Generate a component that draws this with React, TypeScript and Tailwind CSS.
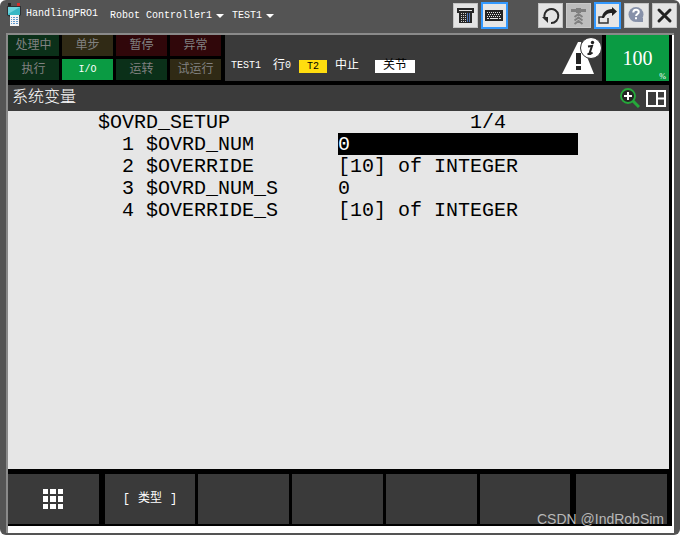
import React from "react";

type Tile = { label: string; color: string };

const tiles: Tile[][] = [
  [
    { label: "处理中", color: "bg-[#0b3019] text-[#818181]" },
    { label: "执行", color: "bg-[#0b3019] text-[#818181]" },
  ],
  [
    { label: "单步", color: "bg-[#302a15] text-[#818181]" },
    { label: "I/O", color: "bg-[#0a9b43] text-white" },
  ],
  [
    { label: "暂停", color: "bg-[#30070a] text-[#818181]" },
    { label: "运转", color: "bg-[#0b3019] text-[#818181]" },
  ],
  [
    { label: "异常", color: "bg-[#30070a] text-[#818181]" },
    { label: "试运行", color: "bg-[#302a15] text-[#818181]" },
  ],
];

const variables = [
  { name: "$OVRD_NUM", value: "0", selected: true },
  { name: "$OVERRIDE", value: "[10] of INTEGER" },
  { name: "$OVRD_NUM_S", value: "0" },
  { name: "$OVERRIDE_S", value: "[10] of INTEGER" },
];

const mono = "font-['Liberation_Mono','Noto_Sans_CJK_SC',monospace]";

const PendantIcon = () => (
  <svg width="16" height="26" viewBox="0 0 16 26" className="shrink-0" aria-hidden="true">
    <path d="M2 1h3v3H2z" fill="#242424" />
    <path d="M11 1h3v3h-3z" fill="#d82b2b" />
    <path d="M1 4h14v9l-3 2H4l-3-2z" fill="#2d3033" />
    <rect x="2" y="5" width="12" height="8" fill="#36b8c5" />
    <path d="M2 5h12L2 12z" fill="#6ed3dc" />
    <path d="M4 13h9v11H4z" fill="#f4f4f4" />
    <path d="M5 15h1v1H5zm2 0h2v1H7zm3 0h2v1h-2zM5 17h1v1H5zm2 0h2v1H7zm3 0h2v1h-2zM5 19h1v1H5zm2 0h2v1H7zm3 0h2v1h-2zM5 21h1v1H5zm2 0h2v1H7zm3 0h2v1h-2z" fill="#5d97cc" />
  </svg>
);

const KeypadIcon = () => (
  <svg width="19" height="19" viewBox="0 0 19 19" shapeRendering="crispEdges" aria-hidden="true">
    <path d="M1 2h17v5h-2v10H3V7H1z" fill="#262626" />
    <path d="M3 4.500h13" stroke="#e2e2e2" />
    <path d="M5.500 7v9M7.500 7v9M9.500 7v9" stroke="#d0d0d0" strokeDasharray="1 1" />
    <path d="M11.500 7v9M13.500 7v9" stroke="#4f77b8" />
  </svg>
);

const KeyboardIcon = () => (
  <svg width="19" height="19" viewBox="0 0 19 19" shapeRendering="crispEdges" aria-hidden="true">
    <rect x="0" y="4" width="18" height="11" fill="#222" />
    <path d="M2 6.500h14M2 10.500h14" stroke="#e6e6e6" strokeDasharray="1 1" />
    <path d="M3 8.500h13" stroke="#e6e6e6" strokeDasharray="1 1" />
    <path d="M2 12.500h2M5 12.500h8M14 12.500h2" stroke="#e6e6e6" />
  </svg>
);

const RefreshIcon = () => (
  <svg width="19" height="19" viewBox="0 0 19 19" aria-hidden="true">
    <path d="M4 13A7 7 0 1 1 10 17" fill="none" stroke="#2a2a2a" strokeWidth="2" />
    <path d="M1 11h6v6z" fill="#2a2a2a" />
  </svg>
);

const SingularityIcon = () => (
  <svg width="19" height="21" viewBox="0 0 19 21" aria-hidden="true">
    <path d="M2 4h5V3h5v1h5v3h-5v1H7V7H2z" fill="#808080" />
    <path d="M5.500 12l4-3 4 3M5.500 15.500l4-3 4 3M5.500 19l4-3 4 3" fill="none" stroke="#808080" strokeWidth="2" />
  </svg>
);

const ExportIcon = () => (
  <svg width="21" height="21" viewBox="0 0 21 21" className="shrink-0" aria-hidden="true">
    <path d="M6 12H2v6h9v-5" fill="none" stroke="#333" strokeWidth="1.500" />
    <path d="M5 13c0-5 4-9 10-9V2l5 4.500-5 4.500V8c-4 0-6 1-8 5z" fill="#202020" />
  </svg>
);

const HelpIcon = () => (
  <svg width="19" height="19" viewBox="0 0 19 19" aria-hidden="true">
    <circle cx="9" cy="8.500" r="7.500" fill="#8791a9" />
    <path d="M12 12h4v4h-6z" fill="#8791a9" />
    <path d="M6.300 6.500c0-3.500 5.500-3.500 5.500-.5 0 2-2.700 2-2.700 4" fill="none" stroke="#fff" strokeWidth="2" />
    <path d="M8 11.300h2v2H8z" fill="#fff" />
  </svg>
);

const CloseIcon = () => (
  <svg width="19" height="19" viewBox="0 0 19 19" aria-hidden="true">
    <path d="M4 4l11 11M15 4L4 15" stroke="#222" strokeWidth="3" strokeLinecap="round" />
  </svg>
);

const AlertIcon = () => (
  <svg width="40" height="38" viewBox="0 0 40 38" aria-hidden="true">
    <path d="M16 5h3l13 32H0z" fill="#fff" />
    <path d="M14 16h5v11h-5zM14 29h5v4h-5z" fill="#242424" />
    <circle cx="29" cy="11" r="10.500" fill="#fff" stroke="#333" />
    <circle cx="30.500" cy="5.500" r="1.700" fill="#222" />
    <path d="M26 9.500l4-.5-2.500 7.500q0 1.500 3-1M25.500 17h2" fill="none" stroke="#222" strokeWidth="2" />
  </svg>
);

const ZoomInIcon = () => (
  <svg width="20" height="20" viewBox="0 0 20 20" aria-hidden="true">
    <circle cx="8" cy="8" r="7" fill="#242424" stroke="#25a83a" strokeWidth="1.800" />
    <path d="M13 13l6 6" stroke="#25a83a" strokeWidth="3" />
    <path d="M8 4v8M4 8h8" stroke="#fff" strokeWidth="2" />
  </svg>
);

const LayoutIcon = () => (
  <svg width="20" height="17" viewBox="0 0 20 17" aria-hidden="true">
    <path d="M1 1h18v15H1zM11 1v15M11 8.500h8" fill="none" stroke="#fff" strokeWidth="2" />
  </svg>
);

const GridIcon = () => (
  <svg width="20" height="20" viewBox="0 0 20 20" fill="#fff" aria-hidden="true">
    <path d="M0 0h5v5H0zM7 0h6v5H7zM15 0h5v5h-5zM0 7h5v6H0zM7 7h6v6H7zM15 7h5v6h-5zM0 15h5v5H0zM7 15h6v5H7zM15 15h5v5h-5z" />
  </svg>
);

const Caret = () => (
  <svg width="8" height="4" viewBox="0 0 8 4" aria-hidden="true">
    <path d="M0 0h8L4 4z" fill="#fff" />
  </svg>
);

type ToolButtonProps = {
  label: string;
  active?: boolean;
  disabled?: boolean;
  children: React.ReactNode;
};

const ToolButton: React.FC<ToolButtonProps> = ({ label, active, disabled, children }) => (
  <button
    type="button"
    aria-label={label}
    disabled={disabled}
    className={`flex shrink-0 items-center justify-center ${
      active
        ? "size-[27px] border-2 border-[#3399ff] bg-[#e6e6e6]"
        : disabled
          ? "size-[25px] border border-[#c9c9c9] bg-[#bdbdbd]"
          : "size-[25px] border border-[#c4c4c4] bg-[#e4e4e4]"
    }`}
  >
    {children}
  </button>
);

const TitleBar = () => (
  <header className="flex h-[33px] items-start pr-[3px] pl-1.5 pt-0.5 text-[10px] text-white">
    <PendantIcon />
    <h1 className="ml-1 pt-1 leading-4">HandlingPRO1</h1>
    <nav className="ml-3 flex gap-2 pt-1.5">
      <button type="button" className="flex items-center gap-1 leading-4">
        Robot Controller1 <Caret />
      </button>
      <button type="button" className="flex items-center gap-1 leading-4">
        TEST1 <Caret />
      </button>
    </nav>
    <div className="ml-auto flex items-center gap-[3px]">
      <ToolButton label="Keypad"><KeypadIcon /></ToolButton>
      <ToolButton label="Keyboard" active><KeyboardIcon /></ToolButton>
      <div className="w-6" />
      <ToolButton label="Refresh"><RefreshIcon /></ToolButton>
      <ToolButton label="Jog" disabled><SingularityIcon /></ToolButton>
      <ToolButton label="Detach" active><ExportIcon /></ToolButton>
      <ToolButton label="Help"><HelpIcon /></ToolButton>
      <ToolButton label="Close"><CloseIcon /></ToolButton>
    </div>
  </header>
);

const StatusBar = () => (
  <div className="flex h-[46px] pr-[3px]">
    <div className="flex gap-[3px]">
      {tiles.map((column, i) => (
        <div key={i} className="flex w-[51px] flex-col gap-[3px]">
          {column.map((tile) => (
            <div
              key={tile.label}
              className={`flex h-[21px] items-center justify-center ${tile.label === "I/O" ? "text-[10px]" : "text-[12px]"} ${tile.color}`}
            >
              {tile.label}
            </div>
          ))}
        </div>
      ))}
    </div>
    <div className="ml-1 flex flex-1 items-end bg-[#3a3a3a] pb-1.5 pl-1.5 text-white">
      <p className="flex items-center pb-px text-[12px] leading-4">
        <span className="text-[10px]">TEST1</span>
        <span className="ml-3">行</span>
        <span className="text-[10px]">0</span>
        <span className="ml-2 h-[13px] w-7 bg-[#ffdd0f] text-center text-[10px] leading-[13px] text-black">T2</span>
        <span className="ml-2">中止</span>
        <span className="ml-4 h-[13px] w-10 bg-white text-center leading-[13px] text-black">关节</span>
      </p>
      <div className="ml-auto">
        <AlertIcon />
      </div>
    </div>
    <div className="relative ml-1 flex w-[63px] items-center justify-center bg-[#0a9b43] font-['Liberation_Serif',serif] text-[20px] text-white">
      100
      <span className="absolute right-[3px] bottom-0 text-[8px] leading-2">%</span>
    </div>
  </div>
);

const VariableTable = () => (
  <table className="ml-[90px] text-left text-[20px] leading-5">
    <thead>
      <tr>
        <th colSpan={2} className="p-0 pt-0.5 font-normal">$OVRD_SETUP</th>
        <th className="p-0 pt-0.5 pl-[132px] font-normal">1/4</th>
      </tr>
    </thead>
    <tbody>
      {variables.map((variable, index) => (
        <tr key={variable.name}>
          <td className="w-12 p-0 pt-0.5 pl-6">{index + 1}</td>
          <td className="w-48 p-0 pt-0.5">{variable.name}</td>
          <td className={`w-60 p-0 pt-0.5 ${variable.selected ? "bg-black text-white" : ""}`}>
            {variable.value}
          </td>
        </tr>
      ))}
    </tbody>
  </table>
);

const FunctionKeys = () => (
  <div className="flex h-[57px] gap-[3px] pt-[5px] pr-[5px] pb-0.5 text-white">
    <button type="button" aria-label="Menu" className="mr-[3px] flex flex-1 items-center justify-center bg-[#3a3a3a]">
      <GridIcon />
    </button>
    <button type="button" className="flex flex-1 items-center justify-center gap-2 bg-[#3a3a3a] text-[12px]">
      <span>[</span>类型<span>]</span>
    </button>
    {["F2", "F3", "F4", "F5"].map((key) => (
      <button key={key} type="button" aria-label={key} className="flex-1 bg-[#3a3a3a]" />
    ))}
    <button type="button" aria-label="Next" className="ml-[3px] flex-1 bg-[#3a3a3a]" />
  </div>
);

export default function App() {
  return (
    <div className="min-h-screen bg-white">
      <div className={`relative flex min-h-screen flex-col rounded-md bg-[#545454] pb-0.5 ${mono}`}>
        <TitleBar />
        <main className="mr-1.5 ml-1.5 flex flex-1 flex-col border-t-2 border-l-2 border-[#8a8a8a] bg-white pr-0.5 pb-[7px]">
          <div className="flex flex-1 flex-col bg-black">
            <StatusBar />
            <div className="mt-1 mr-[3px] flex h-[26px] items-center bg-[#3b3b3b] pr-[3px] pl-1 text-white">
              <h2 className="text-[16px] font-light">系统变量</h2>
              <div className="ml-auto flex items-center gap-1.5">
                <ZoomInIcon />
                <LayoutIcon />
              </div>
            </div>
            <section className="mr-[3px] flex-1 bg-[#e6e6e6] text-black">
              <VariableTable />
            </section>
            <FunctionKeys />
          </div>
        </main>
        <div className="absolute right-4 bottom-2 font-['Liberation_Sans',sans-serif] text-[14px] leading-4 text-[#b8b8b8]">
          CSDN @IndRobSim
        </div>
      </div>
    </div>
  );
}
